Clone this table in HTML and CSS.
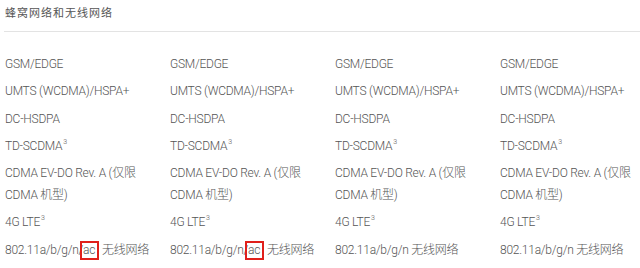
FILE: index.html
```html
<!DOCTYPE html>
<html lang="zh-CN">
<head>
<meta charset="utf-8">
<link rel="stylesheet" href="styles.css">
</head>
<body>
<div class="section">
  <h2 class="title">蜂窝网络和无线网络</h2>
  <div class="grid">
    <ul class="col">
      <li>GSM/EDGE</li>
      <li>UMTS (WCDMA)/HSPA+</li>
      <li>DC-HSDPA</li>
      <li>TD-SCDMA<sup>3</sup></li>
      <li>CDMA EV-DO Rev. A (仅限 CDMA 机型)</li>
      <li>4G LTE<sup>3</sup></li>
      <li class="nw">802.11a/b/g/n/<span class="mark">ac</span> 无线网络</li>
    </ul>
    <ul class="col">
      <li>GSM/EDGE</li>
      <li>UMTS (WCDMA)/HSPA+</li>
      <li>DC-HSDPA</li>
      <li>TD-SCDMA<sup>3</sup></li>
      <li>CDMA EV-DO Rev. A (仅限 CDMA 机型)</li>
      <li>4G LTE<sup>3</sup></li>
      <li class="nw">802.11a/b/g/n/<span class="mark">ac</span> 无线网络</li>
    </ul>
    <ul class="col">
      <li>GSM/EDGE</li>
      <li>UMTS (WCDMA)/HSPA+</li>
      <li>DC-HSDPA</li>
      <li>TD-SCDMA<sup>3</sup></li>
      <li>CDMA EV-DO Rev. A (仅限 CDMA 机型)</li>
      <li>4G LTE<sup>3</sup></li>
      <li class="nw">802.11a/b/g/n 无线网络</li>
    </ul>
    <ul class="col">
      <li>GSM/EDGE</li>
      <li>UMTS (WCDMA)/HSPA+</li>
      <li>DC-HSDPA</li>
      <li>TD-SCDMA<sup>3</sup></li>
      <li>CDMA EV-DO Rev. A (仅限 CDMA 机型)</li>
      <li>4G LTE<sup>3</sup></li>
      <li class="nw">802.11a/b/g/n 无线网络</li>
    </ul>
  </div>
</div>
</body>
</html>
```

FILE: styles.css
```css
html, body {
  margin: 0;
  padding: 0;
  background: #fff;
}
body {
  font-family: Roboto, "Noto Sans CJK SC", sans-serif;
  font-weight: 300;
  color: #555;
}
.section {
  padding: 0 0 0 4px;
}
.title {
  margin: 0;
  padding: 4px 0 0 1px;
  height: 27px;
  font-family: "Noto Sans CJK SC", sans-serif;
  font-size: 11px;
  font-weight: normal;
  letter-spacing: 1px;
  line-height: 16px;
  color: #555;
  border-bottom: 1px solid #e3e3e3;
}
.grid {
  display: grid;
  grid-template-columns: repeat(4, 165px);
  padding: 21px 0 0 1px;
}
.col {
  list-style: none;
  margin: 0;
  padding: 0 10px 0 0;
  display: flex;
  flex-direction: column;
  gap: 5.3px;
}
.col li {
  font-size: 12px;
  letter-spacing: -0.25px;
  line-height: 22px;
}
.col li.nw {
  white-space: nowrap;
}
sup {
  font-size: 7px;
  vertical-align: 6px;
  line-height: 0;
  margin-left: 1px;
}
.mark {
  display: inline-block;
  line-height: 15px;
  border: 2px solid #e0201b;
  padding: 0 2px 0 1px;
  margin-left: -3px;
}
```
